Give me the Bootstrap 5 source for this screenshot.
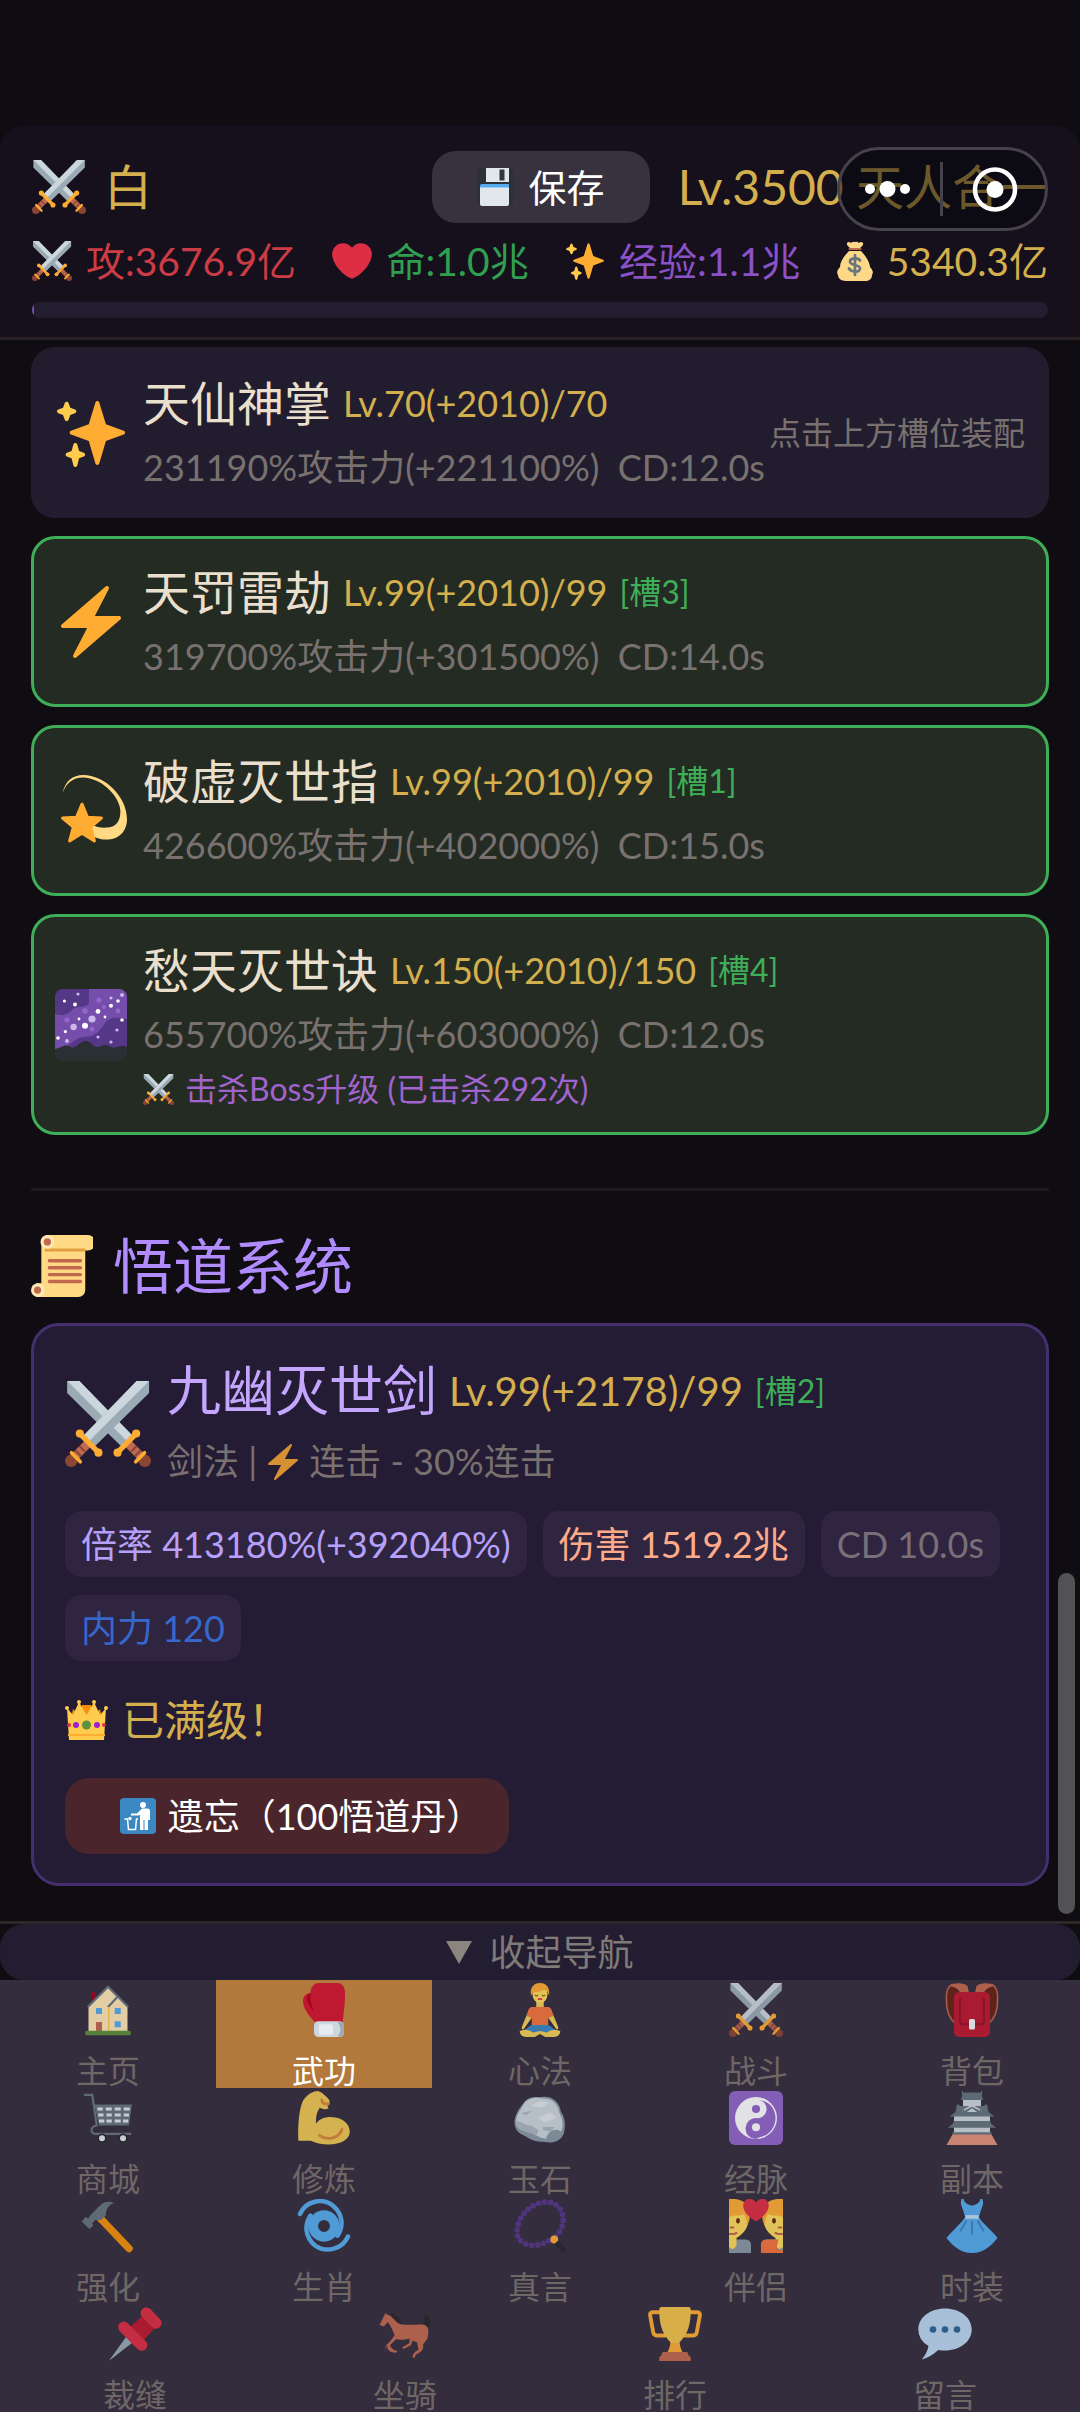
<!DOCTYPE html>
<html lang="zh-CN">
<head>
<meta charset="utf-8">
<meta name="viewport" content="width=device-width, initial-scale=1">
<title>武功</title>
<link href="https://cdn.jsdelivr.net/npm/bootstrap@5.3.0/dist/css/bootstrap.min.css" rel="stylesheet">
<style>
:root{--gold:#d4af4e;--green:#3fae58;--dim:#78716f;--panel:#221d2e}
body{background:#0f0c12;color:#e9dfcc;font-family:Lato,"Noto Sans CJK SC",sans-serif;font-size:36px;line-height:54px}
svg{display:block;flex:none}
.app{min-height:100vh;padding-top:126px}
.hud{background:#15101c;border-bottom:3px solid #292122;border-radius:24px 24px 0 0;padding:25px 32px 19px}
.hero{font-size:48px;line-height:72px;color:var(--gold)}
.hero-name{margin-left:18px}
.hero-level{margin-left:28px}
.save-btn{background:#38323f;color:#fff;border:0;border-radius:24px;height:72px;width:218px;font-size:38px;line-height:72px;padding:0}
.save-btn:hover{background:#443d4c;color:#fff}
.capsule{right:32px;top:21px;width:211px;height:84px;border:3px solid #45424b;border-radius:42px;background:rgba(4,4,8,.5)}
.stats{font-size:39px;line-height:60px;padding-top:8px}
.stat{gap:14px}
.atk{color:#cb3c46}.hp{color:#309f50}.xp{color:#8b52c8}.gold{color:var(--gold)}
.xp-track{height:16px;border-radius:8px;background:#231d30;margin-top:11px}
.xp-track .progress-bar{background:#7a50b0;min-width:2px}
.main-area{padding:7px 31px 33px}
.skill{border:3px solid var(--panel);background:var(--panel);border-radius:24px;padding:20px 21px;margin-bottom:18px;gap:16px}
.skill.on{border-color:var(--green);background:#242b23}
.title-line{line-height:66px;gap:12px}
.skill-name{font-size:47px}
.desc{line-height:55px;margin-top:4px;color:var(--dim);white-space:pre}
.hint,.slot,.boss{font-size:32px}
.hint{color:var(--dim);white-space:nowrap;margin-left:-16px}
.slot{color:var(--green)}
.boss{color:#a163cd;line-height:46px;margin-top:4px;gap:11px}
.rule{height:3px;background:#1d1920;margin:53px 0 42px}
.sect{font-size:60px;line-height:66px;color:#b18cff;gap:20px}
.tome{margin-top:24px;border:3px solid #44306f;border-radius:28px;background:#241b35;padding:32px 31px 29px}
.tome-name{font-size:54px;color:#c5a6ff}
.tome-lv{font-size:40px}
.tome-kind{margin-top:10px}
.chips{gap:18px 16px;margin-top:22px}
.chip{height:66px;line-height:66px;padding:0 16px;border-radius:16px;background:#2f2540}
.c-rate{color:#b7a0fb}.c-dmg{color:#ffab8a}.c-cd{color:#786f78}.c-mp{color:#3667ca}
.full-line{font-size:42px;line-height:60px;margin-top:29px;gap:14px}
.forget{margin-top:28px;width:444px;height:76px;border:0;border-radius:24px;background:#4a252b;color:#fff;font-size:36px;line-height:76px;gap:12px;padding:0 0 0 28px}
.forget:hover{background:#5a2d34;color:#fff}
.thumb{right:5px;bottom:5px;width:17px;height:341px;border-radius:9px;background:#525154}
.dock{background:#332d3d}
.fold-wrap{background:#0f0c12;border-top:3px solid #2e2728}
.fold{width:100%;height:56px;border:0;border-radius:24px;background:#221d30;color:#807a79;font-size:36px;line-height:54px;gap:17px;padding:0}
.tab{height:108px;padding-top:3px;color:#6e6766;font-size:32px;line-height:32px;text-decoration:none;gap:18px}
.tab svg{opacity:.86}
.tab.active{background:#b3783c;color:#fff}
.tab.active svg{opacity:1}
</style>
<script src="https://cdn.jsdelivr.net/npm/bootstrap@5.3.0/dist/js/bootstrap.bundle.min.js"></script>
</head>
<body>
<svg width="0" height="0" class="position-absolute" aria-hidden="true">
<symbol id="swords" viewBox="0 0 36 36">
<path fill="#9aabb5" d="M.9 0H6l22 22.6-4.6 4.6L.9 5z"/><path fill="#ccd6dd" d="M1 0h5l22 22.6-2.3 2.3z"/>
<path fill="#9aabb5" d="M35.200 0H30L7.600 23l4.600 4.600L35.200 5z"/><path fill="#ccd6dd" d="M35.200 0H30L7.600 23l2.300 2.300z"/>
<g id="hilt"><path stroke="#bf6952" stroke-width="3.600" d="M9.300 26.500 4 31.800"/><path stroke="#8a4633" stroke-width=".9" d="m6 27.200 2.400 2.400M4.300 29l2.400 2.400"/><circle cx="2.600" cy="33.400" r="2.600" fill="#8a4633"/><path stroke="#ffac33" stroke-width="1.500" stroke-linecap="round" d="m2.700 30 3.700 3.800"/><path stroke="#ffac33" stroke-width="2.200" d="m6.200 22 7.900 8"/><circle cx="6.200" cy="22" r="1.700" fill="#ffac33"/><circle cx="14" cy="30" r="1.700" fill="#ffac33"/></g>
<use href="#hilt" transform="matrix(-1 0 0 1 36 0)"/>
</symbol>
<symbol id="sparkles" viewBox="0 0 36 36"><path fill="#FFAC33" d="M34.347 16.893l-8.899-3.294-3.323-10.891c-.128-.42-.517-.708-.956-.708-.439 0-.828.288-.956.708l-3.322 10.891-8.900 3.294c-.393.146-.653.519-.653.938 0 .418.260.793.653.938l8.895 3.293 3.324 11.223c.126.424.516.715.959.715.442 0 .833-.291.959-.716l3.324-11.223 8.896-3.293c.391-.144.652-.518.652-.937 0-.418-.261-.792-.653-.938z"/><path fill="#FFCC4D" d="M14.347 27.894l-2.314-.856-.9-3.300c-.118-.436-.513-.738-.964-.738-.451 0-.846.302-.965.737l-.9 3.300-2.313.856c-.393.146-.653.520-.653.938 0 .418.260.793.653.938l2.301.853.907 3.622c.112.444.511.756.970.756.459 0 .858-.312.970-.757l.907-3.622 2.301-.853c.393-.144.653-.519.653-.937 0-.418-.260-.793-.653-.937zM10.009 6.231l-2.364-.875-.876-2.365c-.145-.393-.519-.653-.938-.653-.418 0-.792.260-.938.653l-.875 2.365-2.365.875c-.393.146-.653.520-.653.938 0 .418.260.793.653.938l2.365.875.875 2.365c.146.393.520.653.938.653.418 0 .792-.260.938-.653l.875-2.365 2.365-.875c.393-.146.653-.520.653-.938 0-.418-.260-.792-.653-.938z"/></symbol>
<symbol id="bolt" viewBox="0 0 36 36"><path fill="#FFAC33" d="M32.938 15.651C32.792 15.260 32.418 15 32 15H19.925L26.890 1.458c.219-.426.106-.947-.271-1.243C26.437.071 26.218 0 26 0c-.233 0-.466.082-.653.243L18 6.588 3.347 19.243c-.316.273-.430.714-.284 1.105S3.582 21 4 21h12.075L9.110 34.542c-.219.426-.106.947.271 1.243.182.144.401.215.619.215.233 0 .466-.082.653-.243L18 29.412l14.653-12.655c.317-.273.430-.714.285-1.106z"/></symbol>
</svg>

<div class="app d-flex flex-column">
<header class="hud position-relative">
  <div class="hero d-flex align-items-center">
    <svg width="54" height="54"><use href="#swords"/></svg>
    <span class="hero-name me-auto">白</span>
    <button class="save-btn btn d-flex align-items-center justify-content-center gap-3" type="button">
      <svg width="36" height="38" viewBox="0 0 36 38"><rect width="36" height="38" rx="3" fill="#2c3138"/><path fill="#e1e8ed" d="M9 0h23v14H9z"/><path fill="#31373d" d="M22.500 1.500h5v11h-5z"/><path fill="#e1e8ed" d="M3 18h29v18a2 2 0 0 1-2 2H5a2 2 0 0 1-2-2z"/><path fill="#55acee" d="M5 16h27v3.500H3V18a2 2 0 0 1 2-2z"/></svg>保存</button>
    <span class="hero-level">Lv.3500 天人合一</span>
  </div>
  <div class="capsule position-absolute">
    <svg class="w-100 h-100" viewBox="0 0 205 78" fill="#fff"><circle cx="30" cy="39" r="5"/><circle cx="47.500" cy="39" r="8"/><circle cx="65" cy="39" r="5"/><path fill="#45424b" d="M100 12h3v54h-3z"/><circle cx="155" cy="39.500" r="8.500"/><circle cx="155" cy="39.500" r="20" fill="none" stroke="#fff" stroke-width="4.500"/></svg>
  </div>
  <div class="stats d-flex justify-content-between">
    <span class="stat atk d-flex align-items-center"><svg width="40" height="40"><use href="#swords"/></svg>攻:3676.9亿</span>
    <span class="stat hp d-flex align-items-center"><svg width="40" height="40" viewBox="0 0 36 36"><path fill="#DD2E44" d="M35.885 11.833c0-5.450-4.418-9.868-9.867-9.868-3.308 0-6.227 1.633-8.018 4.129-1.791-2.496-4.710-4.129-8.017-4.129-5.450 0-9.868 4.417-9.868 9.868 0 .772.098 1.520.266 2.241C1.751 22.587 11.216 31.568 18 34.034c6.783-2.466 16.249-11.447 17.617-19.959.170-.721.268-1.469.268-2.242z"/></svg>命:1.0兆</span>
    <span class="stat xp d-flex align-items-center"><svg width="40" height="40"><use href="#sparkles"/></svg>经验:1.1兆</span>
    <span class="stat gold d-flex align-items-center"><svg width="36" height="40" viewBox="0 0 36 40"><path fill="#fdd888" d="M12 10h12c5 5 9 12 9 16 2 2 4 5 2 8 0 4-3 6-7 6H9c-5 0-8-3-8-6-2-3 0-6 2-8 0-5 4-11 9-16z"/><path fill="#fdd888" d="M10 2q2-2 4 0 2-2 4-1 2-1 4 1 2-2 4 0 1 2-3 5H13q-4-3-3-5z"/><path stroke="#bf6952" stroke-width="2" stroke-linecap="round" d="M12.500 8h11"/><path fill="none" stroke="#67757f" stroke-width="2.700" stroke-linecap="round" d="M23 19.500c-1-2.500-9-3.500-10 .5-1 5 11 3 10 8-1 4-9 3-11-.5M18 14v20"/></svg>5340.3亿</span>
  </div>
  <div class="xp-track progress" role="progressbar" aria-label="经验"><div class="progress-bar" style="width:0.1%"></div></div>
</header>

<main class="main-area position-relative">
  <article class="skill d-flex align-items-center">
    <svg width="72" height="72"><use href="#sparkles"/></svg>
    <div class="flex-grow-1">
      <div class="title-line d-flex"><span class="skill-name">天仙神掌</span><span class="gold">Lv.70(+2010)/70</span></div>
      <div class="desc">231190%攻击力(+221100%)  CD:12.0s</div>
    </div>
    <span class="hint">点击上方槽位装配</span>
  </article>
  <article class="skill on d-flex align-items-center">
    <svg width="72" height="72"><use href="#bolt"/></svg>
    <div>
      <div class="title-line d-flex"><span class="skill-name">天罚雷劫</span><span class="gold">Lv.99(+2010)/99</span><span class="slot">[槽3]</span></div>
      <div class="desc">319700%攻击力(+301500%)  CD:14.0s</div>
    </div>
  </article>
  <article class="skill on d-flex align-items-center">
    <svg width="72" height="72" viewBox="0 0 36 36"><path fill="#ffd983" d="M3.800 9C5 3 9 0 14 0c11 0 22 11 22 22 0 7-5 10.300-10 10.300-4 0-7-1.300-10-3.300l1-5c3 2 6 2.500 9 2.300 4-.3 6.700-2.300 6.700-8.300C32.700 12 25 2 14.500 1.200 9 1 5.500 4 3.800 9z"/><path fill="#ffac33" stroke="#ffac33" stroke-width="1.500" stroke-linejoin="round" d="m13.500 14.600 2.700 6.500 7 .4-5.400 4.500 1.900 7-6.200-3.900L7.300 33l1.900-7-5.400-4.500 7-.4z"/></svg>
    <div>
      <div class="title-line d-flex"><span class="skill-name">破虚灭世指</span><span class="gold">Lv.99(+2010)/99</span><span class="slot">[槽1]</span></div>
      <div class="desc">426600%攻击力(+402000%)  CD:15.0s</div>
    </div>
  </article>
  <article class="skill on d-flex align-items-center mb-0">
    <svg width="72" height="72" viewBox="0 0 36 36"><path fill="#553788" d="M4 0h28a4 4 0 0 1 4 4v28H0V4a4 4 0 0 1 4-4z"/><path fill="#744eaa" d="M0 12.500C5 14 7 12 9 10c3-2 8 0 8-4V0h15a4 4 0 0 1 4 4v11c-5-1-9-1-11 2-3 5-6 7-10 7-6 0-7 6-15 6z"/><path fill="#292f33" d="M0 30c3-.5 4-2 6-1.700s2 1.700 4 .7c2-1 3-3 5.500-3s3 3 5.500 3 2-1 4-1 3 1.500 5 1.300 4-1.800 6-.3v3a4 4 0 0 1-4 4H4a4 4 0 0 1-4-4z"/><g fill="#9266cc"><circle cx="22" cy="5.500" r="1.300"/><circle cx="31.500" cy="11" r="1.200"/><circle cx="15" cy="11" r="1.400"/><circle cx="6" cy="15.500" r="1.300"/><circle cx="18.500" cy="20" r="1.200"/><circle cx="24.500" cy="9" r="1"/></g><g fill="#cbb7ea"><circle cx="18.500" cy="15" r="1.800"/><circle cx="9.300" cy="19" r="1.600"/><circle cx="33.500" cy="3" r="1"/><circle cx="11.500" cy="2.500" r=".8"/><circle cx="28" cy="4.500" r=".8"/><circle cx="6" cy="26" r="1"/><circle cx="21.500" cy="24" r=".8"/><circle cx="31" cy="20.500" r=".8"/><circle cx="28" cy="26.500" r=".8"/></g><g fill="#fff"><circle cx="21.500" cy="11.200" r="1.200"/><circle cx="15" cy="18.400" r="1.500"/><circle cx="10" cy="7.800" r="1"/><circle cx="4.700" cy="6" r=".8"/><circle cx="28" cy="8.400" r="1"/><circle cx="31.500" cy="6" r=".9"/><circle cx="25" cy="14" r=".7"/><circle cx="12" cy="15" r=".7"/><circle cx="33.500" cy="15.500" r=".9"/><circle cx="1.500" cy="24.500" r=".9"/><circle cx="5.200" cy="21.300" r=".8"/></g></svg>
    <div>
      <div class="title-line d-flex"><span class="skill-name">愁天灭世诀</span><span class="gold">Lv.150(+2010)/150</span><span class="slot">[槽4]</span></div>
      <div class="desc">655700%攻击力(+603000%)  CD:12.0s</div>
      <div class="boss d-flex align-items-center"><svg width="31" height="31"><use href="#swords"/></svg>击杀Boss升级 (已击杀292次)</div>
    </div>
  </article>

  <div class="rule"></div>
  <h2 class="sect d-flex align-items-center mb-0 fw-normal"><svg width="62" height="62" viewBox="0 0 36 36"><path fill="#ffd983" d="M9 0h24a3 3 0 0 1 0 9h-1.500v23a4 4 0 0 1-4 4H3V28h3V4z"/><path fill="#e39f3d" d="M8 7.800h23.500v1.800H8z"/><circle cx="9.500" cy="4" r="4" fill="#ffe8b6"/><circle cx="9.500" cy="4" r="2.100" fill="#c1694f"/><circle cx="4" cy="32" r="4" fill="#ffe8b6"/><circle cx="3.800" cy="32" r="2.100" fill="#c1694f"/><path stroke="#c1694f" stroke-width="2" stroke-linecap="round" d="M10.700 15h18M10.700 19h18M10.700 23h18M10.700 27h18"/></svg>悟道系统</h2>

  <article class="tome">
    <div class="d-flex align-items-center gap-3">
      <svg width="86" height="86"><use href="#swords"/></svg>
      <div>
        <div class="title-line d-flex"><span class="tome-name">九幽灭世剑</span><span class="tome-lv gold">Lv.99(+2178)/99</span><span class="slot">[槽2]</span></div>
        <div class="desc tome-kind d-flex align-items-center gap-2">剑法 |<svg width="36" height="36" opacity=".82"><use href="#bolt"/></svg>连击 - 30%连击</div>
      </div>
    </div>
    <div class="chips d-flex flex-wrap">
      <span class="chip c-rate">倍率 413180%(+392040%)</span>
      <span class="chip c-dmg">伤害 1519.2兆</span>
      <span class="chip c-cd">CD 10.0s</span>
      <span class="chip c-mp">内力 120</span>
    </div>
    <div class="full-line gold d-flex align-items-center"><svg width="43" height="40" viewBox="0 0 43 40"><path fill="#f4900c" d="m14 18 3-13h9l3 13zM6 18l2-9 4 4 19 0 4-4 2 9z"/><path fill="#ffcc4d" d="M2 8l6 7 6-13 7.500 13L29 2l6 13 6-7-2 32H4z"/><path fill="#ffac33" d="M3 34h37v2H3z"/><g fill="#ffcc4d"><circle cx="2" cy="8" r="2"/><circle cx="14" cy="2" r="2"/><circle cx="29" cy="2" r="2"/><circle cx="41" cy="8" r="2"/></g><circle cx="21.500" cy="25" r="4.500" fill="#5c913b"/><circle cx="11" cy="25" r="3" fill="#9c1fd0"/><circle cx="32" cy="25" r="3" fill="#9c1fd0"/><circle cx="4" cy="25" r="2" fill="#dd2e44"/><circle cx="39" cy="25" r="2" fill="#dd2e44"/></svg>已满级！</div>
    <button class="forget btn d-flex align-items-center justify-content-center" type="button"><svg width="36" height="36" viewBox="0 0 36 36"><rect width="36" height="36" rx="4" fill="#3b88c3"/><circle cx="23" cy="7" r="3" fill="#fff"/><path fill="#fff" d="M22 10.500h5.500q2.500 0 2.500 3V22h-2v10h-3.500V22h-1v10H20V17l-2 .5h-7v-2h6z"/><circle cx="10" cy="20.500" r="1.700" fill="#fff"/><path fill="none" stroke="#fff" stroke-width="1.500" d="M4.500 21h3l1 10.500h7l1-10.500h1.500"/></svg>遗忘（100悟道丹）</button>
  </article>
  <div class="thumb position-absolute"></div>
</main>

<nav class="dock mt-auto">
  <div class="fold-wrap"><button class="fold d-flex align-items-center justify-content-center" type="button"><svg width="26" height="23" viewBox="0 0 26 23"><path fill="#8b8580" d="M0 0h26L13 23z"/></svg>收起导航</button></div>
  <div class="row row-cols-5 g-0">
    <a class="tab d-flex flex-column align-items-center" href="#"><svg width="54" height="54" viewBox="0 0 36 36"><path fill="#a0041e" d="M7 6h3v7H7z"/><path fill="#ffe8b6" d="M18 2 5 15.500V32h26V15l-6.500-6z"/><path fill="none" stroke="#66757f" stroke-width="1.500" d="M4.500 16 18 2.500l6.500 6.500M18 16l6.500-7 7 7"/><path stroke="#ffcc4d" d="M18.500 16v16"/><path fill="#55acee" d="M10 16.700h4v4h-4zM22.500 16.700h4v4h-4zM22.500 25.500h4v4h-4z"/><path fill="#c1694f" d="M10 26h4v6h-4z"/><rect x="2.700" y="31.800" width="30.600" height="3" rx="1.500" fill="#5c913b"/></svg>主页</a>
    <a class="tab active d-flex flex-column align-items-center" href="#" aria-current="page"><svg width="54" height="54" viewBox="0 0 36 36"><path fill="#be1931" d="M15 0h11c4 0 6 2 6 7 0 8-1 14-1.500 19H12C8 22 4 17 4 12c0-3 2-5 5-5.500C9 3 11 0 15 0z"/><path fill="#a0041e" d="M9 6.500c-2.500 1.500-3 5-1 8l3 4.500c0-3-3-6-2-12.500z"/><rect x="11.300" y="25.500" width="20" height="10.500" rx="3" fill="#ccd6dd"/><rect x="14.500" y="27.500" width="9.500" height="7" rx="1.500" fill="#e6edf2"/><path fill="#9aaab4" d="M27 26q4 5 0 9.700h2q2.300-.7 2.300-3V28q0-2-2.300-2z"/></svg>武功</a>
    <a class="tab d-flex flex-column align-items-center" href="#"><svg width="54" height="54" viewBox="0 0 36 36"><path fill="#f2cf58" d="M10.500 18 6 29q-.8 2 1 2l7-10zM25.500 18 30 29q.8 2-1 2l-7-10zM15.500 12h5v5h-5z"/><path fill="#f4743b" d="M13 16h10q2.500 0 3 3l1 3-3.500 1V29h-11v-6L9 22l1-3q.5-3 3-3z"/><path fill="#3b88c3" d="m12 28-5 4 11 2 11-2-5-4z"/><path fill="#f2cf58" d="M4.500 32q5-2 9 1l4.500-1 4.500 1q4-3 9-1 0 4-5 4h-5l-3.500-2-3.500 2h-5q-5 0-5-4z"/><ellipse cx="18" cy="7.500" rx="5" ry="6" fill="#ffdc5d"/><path fill="#ffac33" d="M12 8.500C11 3 14 0 18 0s7 3 6 8.500q-.5-3-3-4-4 2-6.500 1.500-2 .5-2.500 2.500z"/><path fill="none" stroke="#9a6a2a" stroke-width=".8" d="M14.500 8q1 1 2.200 0M19.300 8q1 1 2.200 0"/><path stroke="#df1f32" d="M16.500 10.700h3"/></svg>心法</a>
    <a class="tab d-flex flex-column align-items-center" href="#"><svg width="54" height="54"><use href="#swords"/></svg>战斗</a>
    <a class="tab d-flex flex-column align-items-center" href="#"><svg width="54" height="54" viewBox="0 0 36 36"><path fill="#662113" d="M1 12C0 2 4 0 9 3v25C5 26 1 20 1 12zM35 12c1-10-3-12-8-9v25c4-2 8-8 8-16z"/><path fill="none" stroke="#c1694f" stroke-width="1" d="M7 27C3 24 1 18 1 12 .500 4 3 1 6 1M29 27c4-3 6-9 6-15 .5-8-2-11-5-11"/><path fill="#c1694f" d="M3 2c2-3 11-2 12 0l1 4.500h-6Q9 3 3 2zM33 2c-2-3-11-2-12 0l-1 4.500h6q1-3.500 7-4.500z"/><rect x="6" y="6" width="24" height="30" rx="3.500" fill="#be1931"/><path fill="none" stroke="#991128" stroke-width="1.600" d="M10 10v15q0 2.500 2.500 2.500h11q2.500 0 2.500-2.500V10"/><rect x="16" y="24" width="4" height="7" rx="1" fill="#f5f8fa"/></svg>背包</a>
    <a class="tab d-flex flex-column align-items-center" href="#"><svg width="54" height="54" viewBox="0 0 36 36"><path fill="none" stroke="#66757f" stroke-width="1.500" d="M2 2.500h5.500l3 20.500c-5 1-4 5.500-1 5.500h24"/><path fill="#66757f" d="M9 9h25l-2 14H12z"/><g fill="#e1e8ed"><path d="M11 11h3.500v2H11zM16.500 11h4v2h-4zM22.500 11h4v2h-4zM28.500 11h4v2h-4zM11.500 15H15v2h-3.500zM17 15h3.500v2H17zM22.500 15h4v2h-4zM28.500 15h3.500v2h-3.500zM12 19h3.500v2H12zM17 19h3.500v2H17zM22.500 19h4v2h-4zM28 19h3.500v2H28z"/></g><circle cx="14" cy="31.500" r="3.200" fill="#26292e"/><circle cx="28" cy="31.500" r="3.200" fill="#26292e"/><circle cx="14" cy="31.500" r="2" fill="#e1e8ed"/><circle cx="28" cy="31.500" r="2" fill="#e1e8ed"/></svg>商城</a>
    <a class="tab d-flex flex-column align-items-center" href="#"><svg width="54" height="54" viewBox="0 0 36 36"><path fill="#efc854" d="M14 0c3 1 6 4 7.500 6q.8 2-.5 3.500-1.500 0 .2 2-3 1.500-6-.3-3 4-2.500 10.500c3-4 8-5 13-4 6 1 9.500 5 9.500 9.500 0 5-6 8.500-14 8.500-5 0-9-1-12-2.500H1C.5 26 1 10 5 5Q9 0 14 0z"/><path fill="none" stroke="#d98a3c" stroke-width="1.900" stroke-linecap="round" d="M15 29.500c5 4 13 2 15-4M16.500 6q0 3 4.500 2.500"/></svg>修炼</a>
    <a class="tab d-flex flex-column align-items-center" href="#"><svg width="54" height="54" viewBox="0 0 36 36"><path fill="#8899a6" d="M7 8c3-5 10-4 12-4 8-1 12 4 13 10 3 4 3 9 2 14-2 6-8 7-13 6-6 0-10-2-13-4-5-2-7-5-7-9 0-5 3-9 6-13z"/><path fill="#ccd6dd" d="M7 9c3-5 9-5 13-4 7 0 10 4 11 10 2 3 3 8 1 12-4-3-9 0-10 5-5-1-7-3-10-4-5-1-10-3-10-7 0-5 3-8 5-12z"/><path fill="#aab8c2" d="M2 20c4 0 5 3 10 3l5 3-1 3C10 28 2 26 2 20zM20 24h8l-3 3-5-1zM5 15l8-2-4 3z"/><path fill="#e1e8ed" d="M12 10q6-5 12-2l-5 3zM17 18l8-4 4 4-8 3z"/></svg>玉石</a>
    <a class="tab d-flex flex-column align-items-center" href="#"><svg width="54" height="54" viewBox="0 0 36 36"><rect width="36" height="36" rx="4" fill="#9266cc"/><circle cx="18" cy="18" r="14" fill="#fff"/><path fill="#9266cc" d="M18 32a7 7 0 0 1 0-14 6 6 0 0 0 2-12C28 7 31 13 31 18c0 6-4 12-11 13z"/><circle cx="18" cy="12" r="2.700" fill="#9266cc"/><circle cx="18" cy="24.200" r="2.700" fill="#fff"/></svg>经脉</a>
    <a class="tab d-flex flex-column align-items-center" href="#"><svg width="54" height="54" viewBox="0 0 36 36"><path fill="#ccd6dd" d="M12 4h12v7H12zM6 16h24v13H6z"/><path fill="#66757f" d="M12 0v1h12V0h1l-.5 3 1 3h-15l1-3L11 0zM8 9h1l1 1h16l1-1h1l1 5 4 3H3l4-3zM6 20h24l1 2 3 2.500H2L5 22zM5 27.500h26v2H5z"/><path fill="#ccd6dd" d="m18 9-6 3.500 1 .5 5-2.500 5 2.500 1-.5zm0 2.500L14.500 14h7z"/><path fill="#e2927a" d="M5 29h26l4 7H1z"/></svg>副本</a>
    <a class="tab d-flex flex-column align-items-center" href="#"><svg width="54" height="54" viewBox="0 0 36 36"><path stroke="#f4900c" stroke-width="5" stroke-linecap="round" d="m13 13 19 20"/><path fill="#66757f" d="M22 3c-2-2-7-1.500-9 1L6 11l-1 2-2-1-2.500 3 5 5 2.500-2-.5-2 2-2h4l3-3c0-5 3-8 5.500-8z"/></svg>强化</a>
    <a class="tab d-flex flex-column align-items-center" href="#"><svg width="54" height="54" viewBox="0 0 36 36" fill="none" stroke="#55acee"><circle cx="18" cy="18" r="7.200" stroke-width="6.500"/><path stroke-width="3" stroke-linecap="round" d="M2 10C6 1 17-1 24 4.500c7 6 7 14 3 20M34 25c-4 9-15 11-22 6-7-6-7-14-3-20"/></svg>生肖</a>
    <a class="tab d-flex flex-column align-items-center" href="#"><svg width="54" height="54" viewBox="0 0 36 36"><path fill="none" stroke="#553788" stroke-width="3.800" stroke-linecap="round" stroke-dasharray="0 4" d="M28.500 25c9-9 5-23-6-23C10 2 1 15 3 24c2 8 14 9 22 3"/><circle cx="27.500" cy="27" r="2.600" fill="#ffac33"/><path stroke="#26292e" stroke-width="3.500" stroke-linecap="round" d="m30 30 4 4"/></svg>真言</a>
    <a class="tab d-flex flex-column align-items-center" href="#"><svg width="54" height="54" viewBox="0 0 36 36"><g id="half"><path fill="#8899a6" d="M3 27h8q3.700 0 3.700 4v5H0V27z"/><path fill="#ffdc5d" d="M0 7h11l2 6c0 6-3 10-8 13v5q-2 4-5 1z"/><path fill="#ffac33" d="M0 0c9-1 14 4 14 10 0 4-1 6-2 8 0-4-1-6-2-8-3 2-6 0-10 2z"/><ellipse cx="6" cy="14.500" rx="1.300" ry="1.800" fill="#662113"/><path stroke="#c1694f" stroke-width="1.300" d="M0 23.300q4 .5 5.500-1M.500 19h3"/></g><use href="#half" transform="matrix(-1 0 0 1 36 0)"/><path fill="#f4743b" d="M33 27h-8q-3.700 0-3.700 4v5H36v-2q-4 1-4-3z"/><path fill="#dd2e44" d="M18 15c-5-3-8.500-6.500-8.500-10.500C9.500-1 16-1.500 18 2.500c2-4 8.500-3.500 8.500 2C26.500 8.500 23 12 18 15z"/></svg>伴侣</a>
    <a class="tab d-flex flex-column align-items-center" href="#"><svg width="54" height="54" viewBox="0 0 36 36"><path fill="#55acee" d="M11 0h1.500q0 3 5.500 4.500Q23.500 3 23.500 0H25l.5 3-3 9c3 5 8 8 12.500 14-4 5-9 10-17 10S5 31 1 26c5-6 9-9 12.500-14l-3-9z"/><path fill="#bbddf5" d="M13.500 10.700h9v2.500h-9z"/><path stroke="#3b88c3" stroke-width="1.400" stroke-linecap="round" d="M18 15v8M14 15l-3.500 6M22 15l3.500 6"/></svg>时装</a>
  </div>
  <div class="row row-cols-4 g-0">
    <a class="tab d-flex flex-column align-items-center" href="#"><svg width="54" height="54" viewBox="0 0 36 36"><path fill="#99aab5" d="m12 20 4 4L.500 36z"/><path fill="#be1931" d="m24 5 8 8-8 9-9-9z"/><path stroke="#dd2e44" stroke-width="7.500" stroke-linecap="round" d="m25.500 4 6.500 6.700M10.500 13.500 22.500 25.500"/></svg>裁缝</a>
    <a class="tab d-flex flex-column align-items-center" href="#"><svg width="54" height="54" viewBox="0 0 36 36"><path fill="#292529" d="M31 12q-1-5 1-8 4 3 3 9zM8 4q5 0 8 7l-4 0z"/><path fill="#c1694f" d="M1 12 4 6l1-2 1 1c4 1 5 5 9 6.500 6 1 12-.5 16 .5 3 1 3 5 2 9l-3 4c1 3-1 5-5 7l-.5 2-1.500-.5q0-3 4-5l-1-5-3-1-1 3-5 2.500-1-1 5-3v-3c-3 1-6 1-9 .5l-4 4q1 3 5 4l-1 1q-6 0-6-5l-1.500 4L5 29q-1-3 3-6l3-4C10 15 8 12 6.500 10L4 13z"/></svg>坐骑</a>
    <a class="tab d-flex flex-column align-items-center" href="#"><svg width="54" height="54" viewBox="0 0 36 36"><path fill="none" stroke="#ffac33" stroke-width="2.600" stroke-linejoin="round" d="M8 3.500H3q-2 0-1.500 2.500l2 11q.5 2 2.500 2h6M28 3.500h5q2 0 1.500 2.500l-2 11q-.5 2-2.500 2h-6"/><path fill="#ffac33" d="M15 22h6q0 5 2.500 9h-11Q15 27 15 22z"/><path fill="#f3c44b" d="M9 0h18q1.500 0 1.500 2c0 12-3 17-8 22h-5C10.500 19 7.500 14 7.500 2Q7.500 0 9 0z"/><path fill="#c1694f" d="M10.500 30h15q1.500 0 1.500 2.500 1.500 0 1.500 1.500v2h-21v-2q0-1.500 1.500-1.500 0-2.500 1.500-2.500z"/></svg>排行</a>
    <a class="tab d-flex flex-column align-items-center" href="#"><svg width="54" height="54" viewBox="0 0 36 36"><path fill="#bbd9f2" d="M18 1c10 0 17.800 6 17.800 14S28 29 18 29q-2.500 0-4.500-.4Q9 33 2.500 35 6 31 7 26 .200 22 .200 15C.200 7 8 1 18 1z"/><g fill="#2a6797"><circle cx="10" cy="15" r="2.200"/><circle cx="18" cy="15" r="2.200"/><circle cx="26" cy="15" r="2.200"/></g></svg>留言</a>
  </div>
</nav>
</div>
</body>
</html>
